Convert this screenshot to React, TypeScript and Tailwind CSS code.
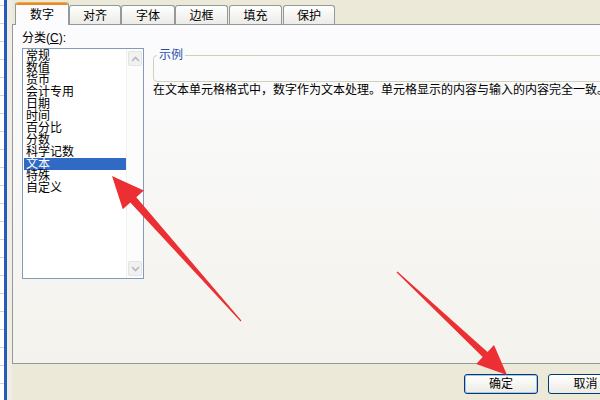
import React from "react";

const categories = ["常规", "数值", "货币", "会计专用", "日期", "时间", "百分比", "分数", "科学记数", "文本", "特殊", "自定义"];

function Tab({ label, active, w, extra = "" }: { label: string; active?: boolean; w: string; extra?: string }) {
  if (active) {
    return (
      <div className={`relative z-10 -mb-[1px] h-[23px] ${w} ${extra} flex flex-col rounded-t-[3px] border-x border-[#919b9c] bg-[#fcfcfe]`}>
        <div className="h-[3px] rounded-t-[3px] bg-[#e68b2c] border-t border-[#f0a94a]" />
        <div className="flex-1 flex items-start justify-center pt-[4px] text-[12px] leading-[12px] text-black">{label}</div>
      </div>
    );
  }
  return (
    <div className={`h-[19px] ${w} ${extra} flex items-start justify-center pt-[4px] rounded-t-[3px] border-x border-t border-[#919b9c] bg-linear-to-b from-[#ffffff] to-[#ecebe6] text-[12px] leading-[12px] text-black`}>
      {label}
    </div>
  );
}

function Chevron({ up }: { up?: boolean }) {
  return (
    <svg width="9" height="6" viewBox="0 0 9 6">
      <path d={up ? "M1 5 L4.5 1.5 L8 5" : "M1 1 L4.5 4.5 L8 1"} fill="none" stroke="#b4b8c0" strokeWidth="1.6" />
    </svg>
  );
}

export default function App() {
  return (
    <div className="relative w-[600px] h-[400px] overflow-hidden flex bg-[#ece9d8] font-['Liberation_Sans','Noto_Sans_CJK_SC',sans-serif] text-black">
      {/* left strip: spreadsheet behind */}
      <div className="w-[12px] h-full flex shrink-0">
        <div className="w-[4px] h-full bg-white flex flex-col">
          <div className="h-[6px] border-b border-[#cfd3da] shrink-0" />
          {Array.from({ length: 22 }).map((_, i) => (
            <div key={i} className="h-[18px] border-b border-[#cfd3da] shrink-0" />
          ))}
        </div>
        <div className="w-[3px] h-full bg-[#2a5ab8]" />
        <div className="w-[5px] h-full bg-[#efede4]" />
      </div>

      <div className="flex-1 flex flex-col min-w-0">
        {/* tabs */}
        <div className="h-[24px] flex items-end pl-[3px] shrink-0">
          <Tab label="数字" active w="w-[54px]" />
          <Tab label="对齐" w="w-[52px]" />
          <Tab label="字体" w="w-[54px]" />
          <Tab label="边框" w="w-[53px]" />
          <Tab label="填充" w="w-[53px]" extra="ml-[1px]" />
          <Tab label="保护" w="w-[52px]" extra="ml-[1px]" />
        </div>

        {/* panel */}
        <div className="h-[340px] shrink-0 border-l border-y border-[#919b9c] bg-linear-to-b from-[#fcfcfe] to-[#f3f2ec] flex">
          {/* left column */}
          <div className="ml-[9px] w-[122px] flex flex-col pt-[7px]">
            <div className="text-[12px] leading-[12px] h-[12px]">
              分类(<span className="underline">C</span>):
            </div>
            <div className="mt-[4px] h-[231px] border border-[#7f9db9] bg-white flex">
              <div className="w-[103px] pt-[1px] pl-[1px] flex flex-col">
                {categories.map((c) => (
                  <div
                    key={c}
                    className={`h-[12px] pl-[2px] text-[12px] leading-[12px] whitespace-nowrap ${
                      c === "文本" ? "bg-[#316ac5] text-white" : ""
                    }`}
                  >
                    {c}
                  </div>
                ))}
              </div>
              <div className="w-[17px] border-l border-[#f0f0f0] bg-[#fcfcfc] flex flex-col justify-between py-[2px] pl-[1px]">
                <div className="w-[14px] h-[15px] rounded-[2px] border border-[#e2e3e6] bg-[#f1f1f0] flex items-center justify-center">
                  <Chevron up />
                </div>
                <div className="w-[14px] h-[15px] rounded-[2px] border border-[#e2e3e6] bg-[#f1f1f0] flex items-center justify-center">
                  <Chevron />
                </div>
              </div>
            </div>
          </div>

          {/* right column */}
          <div className="ml-[9px] flex flex-col pt-[30px] min-w-0">
            <div className="relative w-[470px] h-[27px] rounded-[4px] border border-[#d0d0bf]">
              <span className="absolute -top-[7px] left-[3px] px-[2px] bg-[#fbfbfd] text-[12px] leading-[12px] text-[#1f4fa8]">示例</span>
            </div>
            <div className="mt-[2px] text-[12px] leading-[12px] whitespace-nowrap">
              在文本单元格格式中，数字作为文本处理。单元格显示的内容与输入的内容完全一致。
            </div>
          </div>
        </div>

        {/* buttons */}
        <div className="flex-1 flex items-start pt-[10px] pl-[452px] gap-[10px]">
          <div className="shrink-0 w-[74px] h-[20px] rounded-[3px] border border-[#003c74] bg-linear-to-b from-[#ffffff] to-[#ecebe4] shadow-[inset_0_0_0_1px_#a9c4ef] flex items-center justify-center text-[12px] leading-[12px]">
            确定
          </div>
          <div className="shrink-0 w-[75px] h-[20px] rounded-[3px] border border-[#003c74] bg-linear-to-b from-[#ffffff] to-[#ecebe4] flex items-center justify-center text-[12px] leading-[12px]">
            取消
          </div>
        </div>
      </div>

      {/* red annotation arrows */}
      <svg className="absolute inset-0 pointer-events-none" width="600" height="400" viewBox="0 0 600 400">
        <polygon
          points="112,176 143.8,190.6 136.3,197.2 241.4,320.6 240.6,321.4 130.3,202.6 122.8,209.2"
          fill="#ec2f33"
        />
        <polygon
          points="507,375 476.2,364 482.7,357.1 396.6,272.4 397.4,271.6 487.5,351.9 494,345"
          fill="#ec2f33"
        />
      </svg>
    </div>
  );
}
